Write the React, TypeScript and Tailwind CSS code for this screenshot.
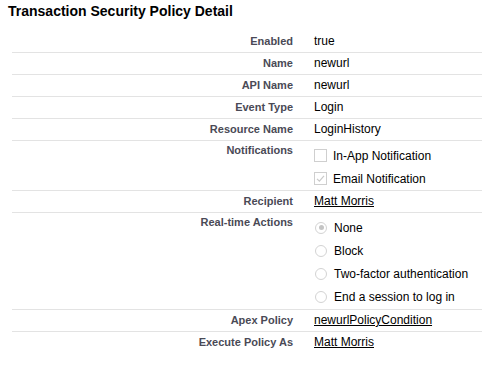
import React from "react";

type Row = {
  label: string;
  value: React.ReactNode;
  multi?: boolean;
};

const Checkbox = ({ checked }: { checked?: boolean }) => (
  <span className="flex h-[13px] w-[13px] shrink-0 items-center justify-center border border-[#cfcfcf] bg-white">
    {checked && (
      <svg width="11" height="11" viewBox="0 0 11 11" fill="none">
        <path d="M2 5.8 L4.4 8.2 L9 2.8" stroke="#c9c9c9" strokeWidth="1.2" />
      </svg>
    )}
  </span>
);

const Radio = ({ checked }: { checked?: boolean }) => (
  <span className="flex h-[12px] w-[12px] shrink-0 items-center justify-center rounded-full border border-[#d3d3d3] bg-white">
    {checked && <span className="h-[5px] w-[5px] rounded-full bg-[#c4c4c4]" />}
  </span>
);

const Option = ({ control, text, gap }: { control: React.ReactNode; text: string; gap: string }) => (
  <div className={`flex h-[23px] items-center ${gap}`}>
    {control}
    <span>{text}</span>
  </div>
);

const Link = ({ children }: { children: React.ReactNode }) => (
  <a href="#" className="text-black underline">
    {children}
  </a>
);

const rows: Row[] = [
  { label: "Enabled", value: "true" },
  { label: "Name", value: "newurl" },
  { label: "API Name", value: "newurl" },
  { label: "Event Type", value: "Login" },
  { label: "Resource Name", value: "LoginHistory" },
  {
    label: "Notifications",
    multi: true,
    value: (
      <div className="pt-[3px]">
        <Option control={<Checkbox />} text="In-App Notification" gap="gap-[6px]" />
        <Option control={<Checkbox checked />} text="Email Notification" gap="gap-[6px]" />
      </div>
    ),
  },
  { label: "Recipient", value: <Link>Matt Morris</Link> },
  {
    label: "Real-time Actions",
    multi: true,
    value: (
      <div className="pt-[3px] pb-[1px]">
        <Option control={<Radio checked />} text="None" gap="gap-[7px] pl-[1px]" />
        <Option control={<Radio />} text="Block" gap="gap-[7px] pl-[1px]" />
        <Option control={<Radio />} text="Two-factor authentication" gap="gap-[7px] pl-[1px]" />
        <Option control={<Radio />} text="End a session to log in" gap="gap-[7px] pl-[1px]" />
      </div>
    ),
  },
  { label: "Apex Policy", value: <Link>newurlPolicyCondition</Link> },
  { label: "Execute Policy As", value: <Link>Matt Morris</Link> },
];

export default function App() {
  return (
    <div className="h-[366px] w-[482px] overflow-hidden bg-white font-['Liberation_Sans',Arial,sans-serif] text-black">
      <h2 className="h-[31px] pl-[8px] pt-[3px] text-[14px] font-bold leading-[16px]">
        Transaction Security Policy Detail
      </h2>
      <div className="ml-[12px]">
        {rows.map((row, i) => (
          <div
            key={row.label}
            className={`flex ${i < rows.length - 1 ? "border-b border-[#e3e3e3]" : ""}`}
          >
            <div
              className={`w-[288px] shrink-0 pr-[7px] text-right text-[11px] font-bold leading-[14px] text-[#4a4a56] ${
                row.multi ? "pt-[2px]" : "pt-[3px] pb-[4px]"
              }`}
            >
              {row.label}
            </div>
            <div
              className={`flex-1 pl-[14px] text-[12px] leading-[14px] ${
                row.multi ? "" : "pt-[3px] pb-[4px]"
              }`}
            >
              {row.value}
            </div>
          </div>
        ))}
      </div>
    </div>
  );
}
